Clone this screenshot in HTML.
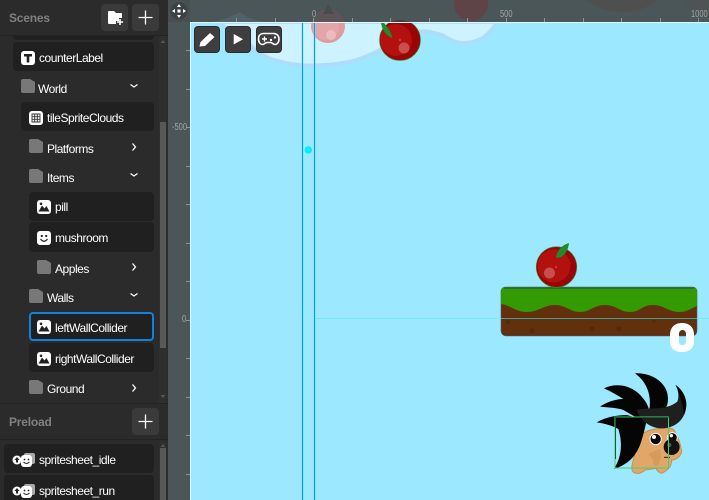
<!DOCTYPE html>
<html>
<head>
<meta charset="utf-8">
<style>
html,body{margin:0;padding:0;width:709px;height:500px;overflow:hidden;background:#9be8ff;}
*{box-sizing:border-box;}
body{position:relative;font-family:"Liberation Sans",sans-serif;}
.a{position:absolute;}
#panel{left:0;top:0;width:168px;height:500px;background:#2b2b2b;overflow:hidden;}
.box{position:absolute;background:#202020;border-radius:4px;}
.t{position:absolute;color:#fff;font-size:12px;letter-spacing:-.47px;line-height:14px;white-space:nowrap;}
.h{position:absolute;color:#808080;font-size:12px;font-weight:bold;line-height:14px;letter-spacing:-.2px;}
.btn{position:absolute;width:27px;height:27px;background:#3a3a3a;border-radius:4px;}
.ico{position:absolute;width:14px;height:14px;}
.tool{position:absolute;top:26px;width:26px;height:27px;background:#3e3e3e;border-radius:4px;border:1px solid #2c2c2c;}
.rl{position:absolute;color:#a0a5a5;font-size:10px;line-height:11px;white-space:nowrap;transform:scaleX(.75);transform-origin:left top;}
</style>
</head>
<body>
<!-- canvas -->
<svg class="a" style="left:168px;top:0" width="541" height="500" viewBox="168 0 541 500">
  <defs><clipPath id="rc"><rect x="168" y="0" width="541" height="22"/></clipPath></defs>
  <rect x="168" y="0" width="541" height="500" fill="#9be8ff"/>
  <!-- clouds -->
  <path d="M220 22 C228 32 238 38 248 43 C258 54 270 60 282 62 C296 66 312 66 325 65 C340 64 354 62 365 57 C378 52 388 46 398 40 C408 33 420 30 430 32 C434 33 438 34 442 35 C450 40 456 43 463 43 C470 43 477 41 483 38 C489 33 494 28 497 22 Z" fill="#ccf3ff" stroke="#aeddfc" stroke-width="4"/>
  <!-- top apple faded -->
  <circle cx="328" cy="26" r="17" fill="#df9c9e"/>
  <circle cx="326" cy="27" r="13" fill="#e3a6a8"/>
  <circle cx="331" cy="35" r="5" fill="#ebbcbe"/>
  <!-- top apple -->
  <circle cx="400" cy="40" r="20.500" fill="#990404" stroke="#3f8e2e" stroke-width=".6"/>
  <circle cx="396" cy="40" r="16" fill="#b31010"/>
  <circle cx="404" cy="48" r="5.500" fill="#c94e4e"/>
  <circle cx="400" cy="40" r=".8" fill="#f070a8"/>
  <path d="M381 21 L384 23 C388 28 392 33 392 38 C387 36 381 30 381 21Z" fill="#1f8a2e"/>
  <!-- platform -->
  <path d="M506 287 H692 Q697 287 697 292 V330 Q697 336 691 336 H507 Q501 336 501 330 V292 Q501 287 506 287Z" fill="#63300e" stroke="#4b5e80" stroke-width=".6"/>
  <path d="M501 304 V292 Q501 287 506 287 H692 Q697 287 697 292 V306 C690 309 686 312 680 312 C668 312 664 305 653 305 C642 305 640 312 630 312 C620 312 616 305 605 305 C594 305 590 312 580 312 C570 312 566 305 555 305 C544 305 538 312 527 312 C516 312 510 305 501 304Z" fill="#339a00"/>
  <rect x="504" y="287" width="190" height="2" fill="#2c6e33"/>
  <g fill="#562808"><circle cx="508" cy="322" r="2"/><circle cx="532" cy="331" r="2.500"/><circle cx="592" cy="329" r="2.500"/><circle cx="619" cy="329" r="2.500"/><circle cx="654" cy="321" r="1.500"/></g>
  <!-- horizontal origin line -->
  <rect x="314" y="318" width="395" height="1" fill="#70ecf5"/>
  <rect x="501" y="318" width="196" height="1" fill="#3f8a80" opacity=".8"/>
  <!-- zero -->
  <path d="M682 323 C690 323 694 328 694 335 V341 C694 348 690 352 682 352 C674 352 670 348 670 341 V335 C670 328 674 323 682 323Z M682.500 330 C680 330 679 332 679 334 V341 C679 344 680 345 682.500 345 C685 345 686 344 686 341 V334 C686 332 685 330 682.500 330Z" fill="#fff" fill-rule="evenodd"/>
  <!-- apple -->
  <circle cx="556.500" cy="267" r="20.300" fill="#990404" stroke="#3f8e2e" stroke-width=".6"/>
  <circle cx="554" cy="266" r="16.500" fill="#b31010"/>
  <circle cx="549.500" cy="273" r="5.500" fill="#c94e4e"/>
  <circle cx="556" cy="267" r=".8" fill="#f060a0"/>
  <path d="M569 243 C562 245 557 250 556 258 C563 258 568 252 569 243Z" fill="#1f8a2e"/>
  <!-- hedgehog, authored in 3x crop coordinates -->
  <g transform="translate(590 365) scale(.33333)">
    <path d="M150 215 C165 188 245 183 252 195 C262 210 272 235 275 260 C272 275 258 285 245 285 C245 300 240 312 215 325 C205 322 200 315 198 310 L165 315 C158 322 148 326 138 325 C125 322 122 312 130 285 C135 260 142 235 150 215Z" fill="#e0a769" stroke="#c98f52" stroke-width="3"/>
    <path d="M175 270 C178 262 195 260 210 252 C215 270 212 295 198 305 L190 298 C192 285 185 275 175 270Z" fill="#d59a5c"/>
    <!-- quills -->
    <path d="M135 25 C190 22 245 60 232 118 C226 138 205 148 178 135 C185 90 170 50 135 25Z" fill="#050505"/>
    <path d="M42 70 C85 50 130 65 155 95 C170 112 178 128 178 145 L110 108 C90 95 65 80 42 70Z" fill="#050505"/>
    <path d="M30 125 C60 105 90 100 115 102 L170 130 L160 170 L100 135 C80 128 55 128 30 125Z" fill="#050505"/>
    <path d="M20 172 C50 155 85 150 110 150 L170 165 C165 190 160 210 155 225 C145 260 125 295 72 312 C92 280 100 240 85 192 C65 180 40 175 20 172Z" fill="#050505"/>
    <path d="M140 135 C175 125 225 140 262 110 C268 95 265 75 257 60 C285 80 298 115 282 150 C272 172 250 188 220 190 C190 192 155 175 140 135Z" fill="#1f1f1f"/>
    <path d="M257 60 C285 80 298 115 282 150 C278 120 270 90 257 60Z" fill="#050505"/>
    <!-- face -->
    <circle cx="197" cy="222" r="17" fill="#0a0a0a" stroke="#f4f4f4" stroke-width="3"/>
    <circle cx="192" cy="216" r="6" fill="#fff"/>
    <circle cx="247" cy="218" r="15" fill="#0a0a0a" stroke="#f4f4f4" stroke-width="3"/>
    <circle cx="244" cy="212" r="5" fill="#fff"/>
    <circle cx="245" cy="246" r="24" fill="#131313"/>
    <circle cx="238" cy="240" r="6" fill="#555"/>
    <path d="M222 277 H240" stroke="#222" stroke-width="3"/>
  </g>
  <!-- selection -->
  <rect x="615" y="417" width="53.500" height="51" fill="none" stroke="#45d173" stroke-width="1"/>
  <rect x="615" y="417" width="53.500" height="1" fill="#155e2a"/>
  <rect x="615" y="417" width="1" height="42" fill="#155e2a"/>
  <!-- blue guide lines -->
  <rect x="301.500" y="0" width="2" height="500" fill="#7fd6fb" opacity=".6"/>
  <rect x="313.500" y="0" width="2" height="500" fill="#7fd6fb" opacity=".6"/>
  <rect x="302" y="0" width="1" height="500" fill="#00a0e8"/>
  <rect x="314" y="0" width="1" height="500" fill="#00a0e8"/>
  <circle cx="308.300" cy="150" r="3.700" fill="#00f0ff"/>
  <!-- top ruler overlay -->
  <rect x="168" y="0" width="541" height="22" fill="#4b5658"/>
  <path d="M190 22 C205 24 222 22 240 12 C250 20 260 22 270 22 Z" fill="#50626a"/>
  <circle cx="328" cy="26" r="17" fill="#5c5557" clip-path="url(#rc)"/>
  <path d="M323 14 L328 4 L334 14Z" fill="#474c4e"/>
  <circle cx="400" cy="40" r="20" fill="#3f3f3f" clip-path="url(#rc)"/>
  <circle cx="471" cy="4" r="17" fill="#5e4446"/>
  <path d="M467 22 A6 2 0 0 0 477 22Z" fill="#e6a788"/>
  <ellipse cx="622" cy="-20" rx="46" ry="32" fill="#4e5050"/>
  <ellipse cx="712" cy="-12" rx="32" ry="30" fill="#4e5353"/>
  <rect x="190" y="22" width="519" height="1" fill="#e4f8ff"/>
  <!-- left ruler -->
  <rect x="168" y="0" width="22" height="500" fill="#4b5658"/>
  <rect x="190" y="22" width="1" height="478" fill="#e4f8ff"/>
  <!-- ticks -->
  <g fill="#8f9596">
    <rect x="236" y="18" width="1" height="4"/><rect x="275" y="18" width="1" height="4"/><rect x="313" y="18" width="1" height="4"/><rect x="352" y="18" width="1" height="4"/><rect x="390" y="18" width="1" height="4"/><rect x="429" y="18" width="1" height="4"/><rect x="467" y="18" width="1" height="4"/><rect x="506" y="18" width="1" height="4"/><rect x="544" y="18" width="1" height="4"/><rect x="583" y="18" width="1" height="4"/><rect x="621" y="18" width="1" height="4"/><rect x="660" y="18" width="1" height="4"/><rect x="698" y="18" width="1" height="4"/>
    <rect x="186" y="50" width="4" height="1"/><rect x="186" y="89" width="4" height="1"/><rect x="186" y="127" width="4" height="1"/><rect x="186" y="166" width="4" height="1"/><rect x="186" y="204" width="4" height="1"/><rect x="186" y="243" width="4" height="1"/><rect x="186" y="281" width="4" height="1"/><rect x="186" y="320" width="4" height="1"/><rect x="186" y="358" width="4" height="1"/><rect x="186" y="397" width="4" height="1"/><rect x="186" y="435" width="4" height="1"/><rect x="186" y="474" width="4" height="1"/>
  </g>
  <!-- pan icon -->
  <rect x="168" y="0" width="22" height="22" fill="#484f51"/>
  <circle cx="179" cy="11" r="8.500" fill="#3c4244"/>
  <g fill="#fff"><rect x="177.500" y="9.500" width="3" height="3"/><path d="M179 4 L181 7 H177Z"/><path d="M179 18 L181 15 H177Z"/><path d="M172 11 L175 9 V13Z"/><path d="M186 11 L183 9 V13Z"/></g>
</svg>
<div class="rl" style="left:312px;top:9px;">0</div>
<div class="rl" style="left:500px;top:9px;">500</div>
<div class="rl" style="left:691px;top:9px;">1000</div>
<div class="rl" style="left:172px;top:122px;">-500</div>
<div class="rl" style="left:182px;top:314px;">0</div>
<!-- tool buttons -->
<div class="tool" style="left:194px;"><svg width="24" height="25" viewBox="0 0 24 25"><path d="M4.500 19.500 L5.500 15 L15 6 L19.500 10 L10 19 Z" fill="#fff"/></svg></div>
<div class="tool" style="left:225px;"><svg width="24" height="25" viewBox="0 0 24 25"><path d="M7.700 7 L17 12.300 L7.700 17.500 Z" fill="#fff"/></svg></div>
<div class="tool" style="left:256px;"><svg width="24" height="25" viewBox="0 0 24 25"><path d="M6.500 6.500 H16.500 C20 6.500 22 9 22 12 C22 15.500 20 17.500 18 17.500 C16 17.500 15.500 15.500 13.500 15.500 H10 C8 15.500 7.500 17.500 5.500 17.500 C3.500 17.500 1.500 15.500 1.500 12 C1.500 9 3 6.500 6.500 6.500Z" fill="none" stroke="#fff" stroke-width="1.600"/><path d="M5 12 H10 M7.500 9.500 V14.500" stroke="#fff" stroke-width="1.400"/><circle cx="14" cy="13" r="1.200" fill="#fff"/><circle cx="18" cy="10.500" r="1.200" fill="#fff"/></svg></div>

<!-- panel -->
<div class="a" id="panel">
  <div class="a" style="left:0;top:35px;width:168px;height:1px;background:#232323"></div>
  <div class="h" style="left:9px;top:11px;">Scenes</div>
  <div class="btn" style="left:101px;top:4px;"><svg width="27" height="27" viewBox="0 0 27 27"><path d="M7 8 Q7 7 8 7 H13 L15 9 H20 Q21 9 21 10 V14 H18 V17 H15 V20 H8 Q7 20 7 19Z" fill="#fff"/><path d="M16 18 H22 M19 15 V21" stroke="#fff" stroke-width="1.500"/></svg></div>
  <div class="btn" style="left:132px;top:4px;"><svg width="27" height="27" viewBox="0 0 27 27"><path d="M6.500 13.500 H20.500 M13.500 6.500 V20.500" stroke="#fff" stroke-width="1.300"/></svg></div>

  <div class="box" style="left:13px;top:36px;width:141px;height:4px;border-radius:0 0 4px 4px"></div>
  <div class="box" style="left:13px;top:42px;width:141px;height:29px"></div>
  <div class="box" style="left:21px;top:102px;width:133px;height:29px"></div>
  <div class="box" style="left:29px;top:192px;width:125px;height:29px"></div>
  <div class="box" style="left:29px;top:222px;width:125px;height:30px"></div>
  <div class="box" style="left:29px;top:312px;width:125px;height:29px;border:2px solid #0d84dc;"></div>
  <div class="box" style="left:29px;top:343px;width:125px;height:29px"></div>

  <!-- counterLabel -->
  <svg class="ico" style="left:21px;top:51px" viewBox="0 0 14 14"><rect width="14" height="14" rx="3" fill="#fff"/><path d="M3 3 H11 V5.500 H8.300 V11.500 H5.700 V5.500 H3Z" fill="#222"/></svg>
  <div class="t" style="left:39px;top:51px;">counterLabel</div>
  <!-- World -->
  <svg class="ico" style="left:21px;top:79px" viewBox="0 0 14 14"><path d="M0 2 Q0 0 2 0 H9 L14 3 V12 Q14 14 12 14 H2 Q0 14 0 12Z" fill="#787878"/></svg>
  <div class="t" style="left:38px;top:82px;">World</div>
  <svg class="a" style="left:129px;top:83px" width="10" height="6" viewBox="0 0 10 6"><path d="M1.500 1.500 L5 4 L8.500 1.500" fill="none" stroke="#fff" stroke-width="1.200"/></svg>
  <!-- tileSpriteClouds -->
  <svg class="ico" style="left:29px;top:111px" viewBox="0 0 14 14"><rect width="14" height="14" rx="3" fill="#fff"/><path d="M3 3H11V11H3ZM3 5.700H11M3 8.300H11M5.700 3V11M8.300 3V11" fill="none" stroke="#333" stroke-width=".9"/></svg>
  <div class="t" style="left:47px;top:111px;">tileSpriteClouds</div>
  <!-- Platforms -->
  <svg class="ico" style="left:29px;top:139px" viewBox="0 0 14 14"><path d="M0 2 Q0 0 2 0 H9 L14 3 V12 Q14 14 12 14 H2 Q0 14 0 12Z" fill="#787878"/></svg>
  <div class="t" style="left:47px;top:142px;">Platforms</div>
  <svg class="a" style="left:131px;top:142px" width="6" height="10" viewBox="0 0 6 10"><path d="M1.500 1.500 L4.500 5 L1.500 8.500" fill="none" stroke="#fff" stroke-width="1.300"/></svg>
  <!-- Items -->
  <svg class="ico" style="left:29px;top:169px" viewBox="0 0 14 14"><path d="M0 2 Q0 0 2 0 H9 L14 3 V12 Q14 14 12 14 H2 Q0 14 0 12Z" fill="#787878"/></svg>
  <div class="t" style="left:47px;top:171px;">Items</div>
  <svg class="a" style="left:129px;top:172px" width="10" height="6" viewBox="0 0 10 6"><path d="M1.500 1.500 L5 4 L8.500 1.500" fill="none" stroke="#fff" stroke-width="1.200"/></svg>
  <!-- pill -->
  <svg class="ico" style="left:37px;top:200px" viewBox="0 0 14 14"><rect width="14" height="14" rx="3" fill="#fff"/><path d="M1.500 11.500 L5 5.500 L7.500 8.500 L9.500 6 L12.500 11.500Z" fill="#222"/><circle cx="4" cy="3.800" r="1.300" fill="#222"/></svg>
  <div class="t" style="left:55px;top:200px;">pill</div>
  <!-- mushroom -->
  <svg class="ico" style="left:37px;top:231px" viewBox="0 0 14 14"><rect width="14" height="14" rx="3" fill="#fff"/><circle cx="4.800" cy="5" r="1.100" fill="#222"/><circle cx="9.200" cy="5" r="1.100" fill="#222"/><path d="M3.500 8 Q7 12.500 10.500 8" fill="none" stroke="#222" stroke-width="1.200"/></svg>
  <div class="t" style="left:55px;top:231px;">mushroom</div>
  <!-- Apples -->
  <svg class="ico" style="left:37px;top:260px" viewBox="0 0 14 14"><path d="M0 2 Q0 0 2 0 H9 L14 3 V12 Q14 14 12 14 H2 Q0 14 0 12Z" fill="#787878"/></svg>
  <div class="t" style="left:55px;top:262px;">Apples</div>
  <svg class="a" style="left:131px;top:262px" width="6" height="10" viewBox="0 0 6 10"><path d="M1.500 1.500 L4.500 5 L1.500 8.500" fill="none" stroke="#fff" stroke-width="1.300"/></svg>
  <!-- Walls -->
  <svg class="ico" style="left:29px;top:289px" viewBox="0 0 14 14"><path d="M0 2 Q0 0 2 0 H9 L14 3 V12 Q14 14 12 14 H2 Q0 14 0 12Z" fill="#787878"/></svg>
  <div class="t" style="left:47px;top:291px;">Walls</div>
  <svg class="a" style="left:129px;top:292px" width="10" height="6" viewBox="0 0 10 6"><path d="M1.500 1.500 L5 4 L8.500 1.500" fill="none" stroke="#fff" stroke-width="1.200"/></svg>
  <!-- leftWallCollider -->
  <svg class="ico" style="left:37px;top:320px" viewBox="0 0 14 14"><rect width="14" height="14" rx="3" fill="#fff"/><path d="M1.500 11.500 L5 5.500 L7.500 8.500 L9.500 6 L12.500 11.500Z" fill="#222"/><circle cx="4" cy="3.800" r="1.300" fill="#222"/></svg>
  <div class="t" style="left:55px;top:321px;">leftWallCollider</div>
  <!-- rightWallCollider -->
  <svg class="ico" style="left:37px;top:352px" viewBox="0 0 14 14"><rect width="14" height="14" rx="3" fill="#fff"/><path d="M1.500 11.500 L5 5.500 L7.500 8.500 L9.500 6 L12.500 11.500Z" fill="#222"/><circle cx="4" cy="3.800" r="1.300" fill="#222"/></svg>
  <div class="t" style="left:55px;top:352px;">rightWallCollider</div>
  <!-- Ground -->
  <svg class="ico" style="left:29px;top:380px" viewBox="0 0 14 14"><path d="M0 2 Q0 0 2 0 H9 L14 3 V12 Q14 14 12 14 H2 Q0 14 0 12Z" fill="#787878"/></svg>
  <div class="t" style="left:47px;top:382px;">Ground</div>
  <svg class="a" style="left:131px;top:383px" width="6" height="10" viewBox="0 0 6 10"><path d="M1.500 1.500 L4.500 5 L1.500 8.500" fill="none" stroke="#fff" stroke-width="1.300"/></svg>

  <!-- scrollbar upper -->
  <div class="a" style="left:159px;top:36px;width:8px;height:367px;background:#2f2f2f"></div>
  <div class="a" style="left:160px;top:122px;width:6px;height:226px;background:#585858"></div>
  <svg class="a" style="left:159px;top:38px" width="8" height="6"><path d="M1.500 5 L4 2 L6.500 5Z" fill="#555"/></svg>
  <svg class="a" style="left:159px;top:394px" width="8" height="6"><path d="M1.500 1 L4 4 L6.500 1Z" fill="#555"/></svg>

  <!-- Preload -->
  <div class="a" style="left:0;top:403px;width:168px;height:1px;background:#232323"></div>
  <div class="a" style="left:0;top:439px;width:168px;height:1px;background:#232323"></div>
  <div class="h" style="left:9px;top:415px;">Preload</div>
  <div class="btn" style="left:132px;top:408px;"><svg width="27" height="27" viewBox="0 0 27 27"><path d="M6.500 13.500 H20.500 M13.500 6.500 V20.500" stroke="#fff" stroke-width="1.300"/></svg></div>
  <div class="box" style="left:4px;top:444px;width:150px;height:29px"></div>
  <div class="box" style="left:4px;top:475px;width:150px;height:29px"></div>
  <svg class="a" style="left:12px;top:453px" width="24" height="14" viewBox="0 0 24 14"><circle cx="5" cy="7" r="4.500" fill="#fff"/><path d="M5 4 L7.500 7 H6 V9.500 H4 V7 H2.500Z" fill="#222"/><rect x="12" y="0" width="11" height="11" rx="2" fill="#a8a8a8"/><rect x="9" y="2" width="11" height="12" rx="3" fill="#fff"/><circle cx="12.500" cy="6.500" r=".9" fill="#222"/><circle cx="16.500" cy="6.500" r=".9" fill="#222"/><path d="M11.500 9 Q14.500 12 17.500 9" stroke="#222" fill="none"/></svg>
  <div class="t" style="left:39px;top:453px;">spritesheet_idle</div>
  <svg class="a" style="left:12px;top:484px" width="24" height="14" viewBox="0 0 24 14"><circle cx="5" cy="7" r="4.500" fill="#fff"/><path d="M5 4 L7.500 7 H6 V9.500 H4 V7 H2.500Z" fill="#222"/><rect x="12" y="0" width="11" height="11" rx="2" fill="#a8a8a8"/><rect x="9" y="2" width="11" height="12" rx="3" fill="#fff"/><circle cx="12.500" cy="6.500" r=".9" fill="#222"/><circle cx="16.500" cy="6.500" r=".9" fill="#222"/><path d="M11.500 9 Q14.500 12 17.500 9" stroke="#222" fill="none"/></svg>
  <div class="t" style="left:39px;top:484px;">spritesheet_run</div>
  <div class="a" style="left:159px;top:441px;width:8px;height:59px;background:#2f2f2f"></div>
  <div class="a" style="left:160px;top:448px;width:6px;height:52px;background:#585858"></div>
  <svg class="a" style="left:159px;top:442px" width="8" height="6"><path d="M1.500 5 L4 2 L6.500 5Z" fill="#555"/></svg>
</div>
</body>
</html>
